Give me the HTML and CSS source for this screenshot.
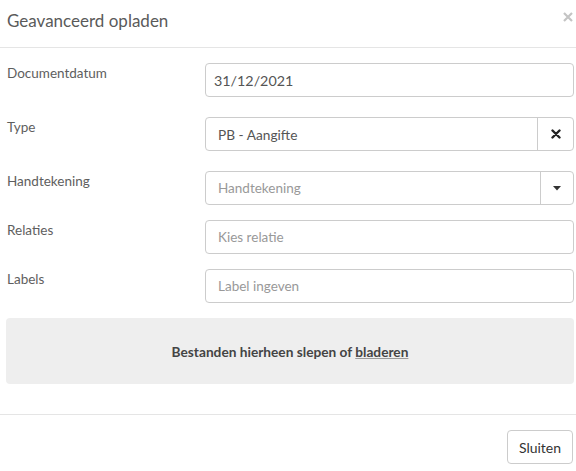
FILE: index.html
```html
<!DOCTYPE html>
<html lang="nl">
<head>
<meta charset="utf-8">
<link rel="stylesheet" href="styles.css">
</head>
<body>
<div class="modal">
  <div class="modal-header">
    <h4 class="modal-title">Geavanceerd opladen</h4>
    <span class="close">
      <svg width="10" height="10" viewBox="0 0 10 10"><path d="M1 1 L9 9 M9 1 L1 9" stroke="#c4c4c4" stroke-width="2.2"/></svg>
    </span>
  </div>
  <div class="modal-body">
    <div class="row row-wide">
      <label class="lbl">Documentdatum</label>
      <div class="field field-date"><span class="value">31/12/2021</span></div>
    </div>
    <div class="row row-wide">
      <label class="lbl">Type</label>
      <div class="field">
        <span class="value value-sel">PB - Aangifte</span>
        <span class="addon addon-x">
          <svg width="10" height="10" viewBox="0 0 10 10"><path d="M1.5 1.5 L8.5 8.5 M8.5 1.5 L1.5 8.5" stroke="#222" stroke-width="2.4" stroke-linecap="round"/></svg>
        </span>
      </div>
    </div>
    <div class="row">
      <label class="lbl">Handtekening</label>
      <div class="field">
        <span class="placeholder">Handtekening</span>
        <span class="addon addon-caret">
          <svg width="8" height="5" viewBox="0 0 8 5"><path d="M0 0 H8 L4 4.5 Z" fill="#333"/></svg>
        </span>
      </div>
    </div>
    <div class="row">
      <label class="lbl">Relaties</label>
      <div class="field"><span class="placeholder">Kies relatie</span></div>
    </div>
    <div class="row">
      <label class="lbl">Labels</label>
      <div class="field"><span class="placeholder">Label ingeven</span></div>
    </div>
    <div class="dropzone">
      <span>Bestanden hierheen slepen of <a class="browse">bladeren</a></span>
    </div>
  </div>
  <div class="modal-footer">
    <button class="btn">Sluiten</button>
  </div>
</div>
</body>
</html>
```
FILE: styles.css
```css
html, body {
  margin: 0;
  padding: 0;
  background: #fff;
}
body {
  font-family: Lato, "Open Sans", sans-serif;
  color: #5a5a5a;
  width: 576px;
  height: 471px;
  overflow: hidden;
}
.modal {
  display: flex;
  flex-direction: column;
}
.modal-header {
  display: flex;
  justify-content: space-between;
  align-items: flex-start;
  height: 48px;
  border-bottom: 1px solid #e5e5e5;
  padding: 0 3px 0 7px;
  box-sizing: border-box;
}
.modal-title {
  margin: 0;
  padding-top: 9px;
  font-size: 17px;
  font-weight: 400;
  line-height: 24px;
  color: #5a5a5a;
}
.close {
  display: flex;
  padding-top: 12px;
}
.modal-body {
  padding: 15px 2px 0 6px;
  display: flex;
  flex-direction: column;
}
.row {
  display: grid;
  grid-template-columns: 199px 1fr;
  align-items: start;
  margin-bottom: 15px;
}
.row-wide {
  margin-bottom: 20px;
}
.lbl {
  padding-left: 1px;
  font-size: 13.5px;
  line-height: 20px;
  color: #5e5e5e;
}
.field {
  height: 34px;
  box-sizing: border-box;
  border: 1px solid #ccc;
  border-radius: 4px;
  display: flex;
  align-items: center;
  padding-left: 12px;
  background: #fff;
}
.field-date {
  padding-left: 8px;
}
.value {
  flex: 1;
  font-size: 14.3px;
  color: #555;
}
.value-sel {
  font-size: 13.7px;
}
.placeholder {
  flex: 1;
  font-size: 13.5px;
  color: #999;
}
.addon {
  height: 100%;
  display: flex;
  align-items: center;
  justify-content: center;
  border-left: 1px solid #ccc;
}
.addon-x {
  width: 35px;
}
.addon-caret {
  width: 32px;
}
.dropzone {
  height: 66px;
  background: #eee;
  border-radius: 4px;
  display: flex;
  align-items: center;
  justify-content: center;
  font-size: 13.7px;
  font-weight: 700;
  color: #444;
}
.browse {
  color: #444;
  text-decoration: underline;
  text-decoration-color: #999;
}
.modal-footer {
  margin-top: 30px;
  border-top: 1px solid #e5e5e5;
  padding: 15px 3px 0 0;
  display: flex;
  justify-content: flex-end;
}
.btn {
  font-family: Lato, "Open Sans", sans-serif;
  font-size: 14px;
  color: #333;
  background: #fff;
  border: 1px solid #ccc;
  border-radius: 4px;
  height: 34px;
  width: 66px;
  padding: 0;
}
```
